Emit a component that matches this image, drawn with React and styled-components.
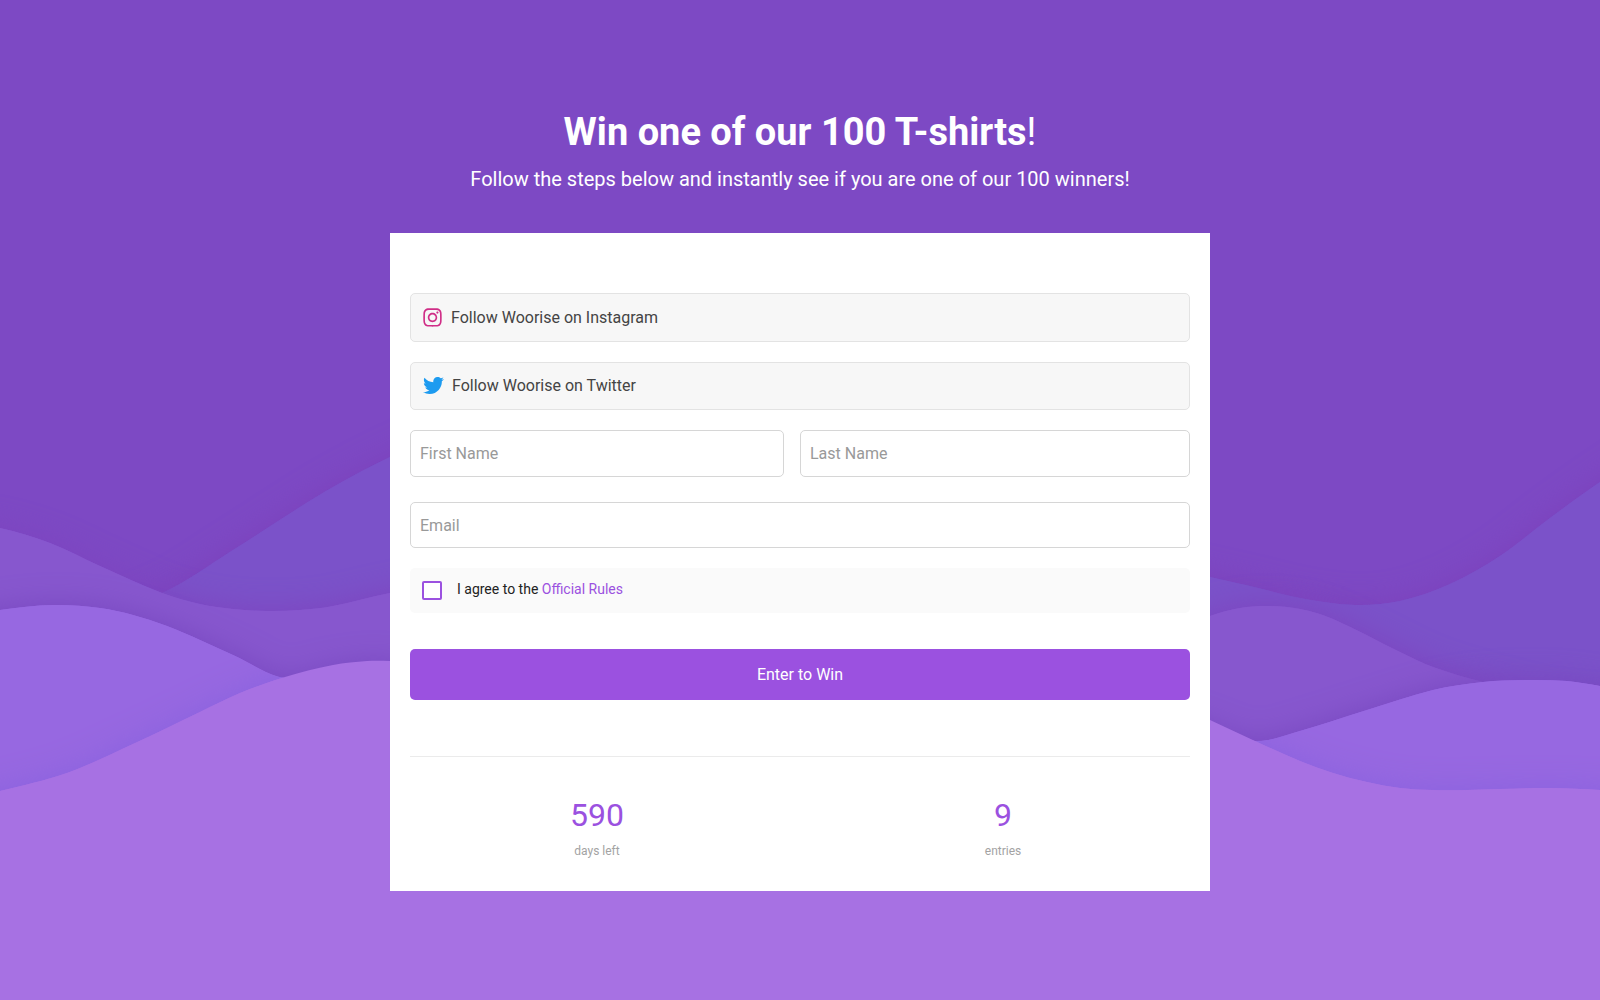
import React from "react";
import styled, { createGlobalStyle } from "styled-components";
import { FaInstagram, FaTwitter } from "react-icons/fa";

const GlobalStyle = createGlobalStyle`
  *, *::before, *::after { box-sizing: border-box; }
  body {
    margin: 0;
    background: #7d49c4;
    font-family: Roboto, "Liberation Sans", sans-serif;
  }
`;

const Page = styled.div`
  position: relative;
  isolation: isolate;
  min-height: 100vh;
  display: flex;
  flex-direction: column;
  align-items: center;
  padding: 109px 20px 60px;
`;

const Backdrop = styled.svg`
  position: absolute;
  inset: 0;
  z-index: -1;
  width: 100%;
  height: 100%;
`;

const Header = styled.header`
  display: flex;
  flex-direction: column;
  gap: 10px;
  margin-bottom: 40px;
  color: #fff;
  text-align: center;
`;

const Title = styled.h1`
  margin: 0;
  font-size: 38px;
  line-height: 46px;
  font-weight: 400;
`;

const Subtitle = styled.p`
  margin: 0;
  font-size: 20px;
  line-height: 28px;
`;

const Card = styled.main`
  width: 100%;
  max-width: 820px;
  padding: 60px 20px 32px;
  background: #fff;
`;

const Form = styled.form`
  display: flex;
  flex-direction: column;
`;

const SocialList = styled.div`
  display: flex;
  flex-direction: column;
  gap: 20px;
  margin-bottom: 20px;
`;

const SocialButton = styled.button`
  display: flex;
  align-items: center;
  gap: 9px;
  padding: 14px 12px;
  border: 1px solid #e3e3e3;
  border-radius: 5px;
  background: #f7f7f7;
  color: #444;
  font: inherit;
  font-size: 16px;
  line-height: 18px;
  text-align: left;
  cursor: pointer;
`;

const InstagramIcon = styled(FaInstagram)`
  width: 19px;
  height: 21px;
  margin: -1px 0;
  color: #d02e87;
`;

const TwitterIcon = styled(FaTwitter)`
  width: 21px;
  height: 21px;
  margin: -2px -1px -1px 0;
  color: #1d9bf0;
`;

const NameRow = styled.div`
  display: grid;
  grid-template-columns: 1fr 1fr;
  margin-bottom: 25px;
`;

const NameCell = styled.div`
  display: flex;
  padding-right: ${(p) => (p.$spaced ? "16px" : "0")};
`;

const TextInput = styled.input`
  width: 100%;
  min-width: 0;
  height: ${(p) => p.$height}px;
  padding: 0 9px;
  border: 1px solid #d6d6d6;
  border-radius: 5px;
  background: #fff;
  color: #333;
  font: inherit;
  font-size: 16px;
  &::placeholder {
    color: #999;
    opacity: 1;
  }
`;

const Consent = styled.div`
  display: flex;
  align-items: flex-start;
  gap: 15px;
  margin: 20px 0 36px;
  padding: 13px 12px;
  border-radius: 5px;
  background: #fafafa;
`;

const Checkbox = styled.input`
  appearance: none;
  flex: none;
  width: 20px;
  height: 19px;
  margin: 0;
  border: 2px solid #9b51e0;
  border-radius: 2px;
  background: #fff;
  cursor: pointer;
  &:checked {
    background: #9b51e0;
  }
`;

const ConsentLabel = styled.label`
  color: #222;
  font-size: 14px;
  line-height: 16px;
`;

const RulesLink = styled.a`
  color: #9b51e0;
  text-decoration: none;
`;

const SubmitButton = styled.button`
  height: 51px;
  border: 0;
  border-radius: 5px;
  background: #9b51e0;
  color: #fff;
  font: inherit;
  font-size: 16px;
  cursor: pointer;
`;

const Stats = styled.section`
  display: grid;
  grid-template-columns: 1fr 1fr;
  gap: 32px;
  margin-top: 56px;
  padding-top: 40px;
  border-top: 1px solid #ebebeb;
`;

const Stat = styled.div`
  display: flex;
  flex-direction: column;
  align-items: center;
  gap: 10px;
`;

const StatValue = styled.span`
  color: #9b51e0;
  font-size: 32px;
  line-height: 36px;
`;

const StatLabel = styled.span`
  color: #a3a3a3;
  font-size: 12px;
  line-height: 16px;
`;

const WAVES = [
  {
    fill: "#7b52c9",
    shadow: "#7c41bb",
    points: [[-60, 640], [60, 625], [162, 593], [233, 550], [300, 507], [333, 487], [390, 457], [460, 428], [640, 400], [900, 470], [1100, 549], [1210, 577], [1250, 586], [1300, 598], [1355, 605], [1400, 601], [1450, 584], [1500, 556], [1550, 518], [1600, 482], [1680, 430]],
  },
  {
    fill: "#8757ce",
    shadow: "#7d44bf",
    points: [[-60, 518], [0, 528], [50, 543], [100, 566], [162, 593], [200, 604], [233, 609], [267, 611], [300, 610], [333, 606], [390, 593], [600, 560], [900, 660], [1100, 658], [1210, 616], [1240, 608], [1270, 606], [1300, 609], [1333, 619], [1400, 652], [1433, 667], [1483, 682], [1560, 700], [1680, 705]],
  },
  {
    fill: "#9768e1",
    shadow: "#7848c0",
    points: [[-60, 622], [0, 610], [53, 605], [100, 608], [133, 615], [167, 626], [200, 640], [233, 655], [285, 678], [333, 668], [390, 664], [600, 722], [850, 700], [1100, 690], [1210, 726], [1255, 741], [1300, 731], [1367, 710], [1433, 690], [1483, 682], [1525, 680], [1567, 681], [1600, 686], [1680, 700]],
  },
  {
    fill: "#a771e3",
    shadow: "#8a62df",
    points: [[-60, 805], [0, 791], [67, 773], [133, 744], [200, 712], [240, 693], [285, 677], [333, 665], [367, 661], [390, 661], [420, 663], [600, 720], [850, 640], [1100, 667], [1210, 720], [1255, 741], [1300, 761], [1333, 773], [1367, 782], [1400, 788], [1433, 790], [1467, 790], [1500, 789], [1550, 788], [1600, 790], [1680, 796]],
  },
];

// Smooth curve through the crest points, closed along the bottom edge.
function wavePath(points) {
  let d = `M${points[0][0]} ${points[0][1]}`;
  for (let i = 0; i < points.length - 1; i += 1) {
    const before = points[Math.max(i - 1, 0)];
    const a = points[i];
    const b = points[i + 1];
    const after = points[Math.min(i + 2, points.length - 1)];
    const span = b[0] - a[0];
    const slopeA = (b[1] - before[1]) / (b[0] - before[0]);
    const slopeB = (after[1] - a[1]) / (after[0] - a[0]);
    d += `C${a[0] + span / 3} ${a[1] + (slopeA * span) / 3} ${b[0] - span / 3} ${b[1] - (slopeB * span) / 3} ${b[0]} ${b[1]}`;
  }
  return `${d}V1080H${points[0][0]}Z`;
}

const FRONT = WAVES.length - 1;

// The front wave casts its shade only on the wave right behind it.
function Waves() {
  return (
    <Backdrop viewBox="0 0 1600 1000" preserveAspectRatio="none" aria-hidden="true">
      <defs>
        {WAVES.map((wave, i) => (
          <filter key={wave.fill} id={`wave-${i}`} filterUnits="userSpaceOnUse" x="-60" y="300" width="1740" height="780" colorInterpolationFilters="sRGB">
            <feDropShadow dx="0" dy="0" stdDeviation="14" floodColor={wave.shadow} />
          </filter>
        ))}
        <clipPath id="behind-front">
          <path d={wavePath(WAVES[FRONT - 1].points)} />
        </clipPath>
      </defs>
      <rect width="1600" height="1000" fill="#7d49c4" />
      {WAVES.map((wave, i) => (
        <React.Fragment key={wave.fill}>
          <g clipPath={i === FRONT ? "url(#behind-front)" : undefined}>
            <path d={wavePath(wave.points)} fill={wave.fill} filter={`url(#wave-${i})`} />
          </g>
          <path d={wavePath(wave.points)} fill={wave.fill} />
        </React.Fragment>
      ))}
    </Backdrop>
  );
}

export default function App() {
  return (
    <>
      <GlobalStyle />
      <Page>
        <Waves />
        <Header>
          <Title><strong>Win one of our 100 T-shirts</strong>!</Title>
          <Subtitle>Follow the steps below and instantly see if you are one of our 100 winners!</Subtitle>
        </Header>
        <Card>
          <Form onSubmit={(e) => e.preventDefault()}>
            <SocialList>
              <SocialButton type="button"><InstagramIcon />Follow Woorise on Instagram</SocialButton>
              <SocialButton type="button"><TwitterIcon />Follow Woorise on Twitter</SocialButton>
            </SocialList>
            <NameRow>
              <NameCell $spaced>
                <TextInput $height={47} type="text" placeholder="First Name" aria-label="First Name" />
              </NameCell>
              <NameCell>
                <TextInput $height={47} type="text" placeholder="Last Name" aria-label="Last Name" />
              </NameCell>
            </NameRow>
            <TextInput $height={46} type="email" placeholder="Email" aria-label="Email" />
            <Consent>
              <Checkbox type="checkbox" id="rules" />
              <ConsentLabel htmlFor="rules">
                I agree to the <RulesLink href="#rules">Official Rules</RulesLink>
              </ConsentLabel>
            </Consent>
            <SubmitButton type="submit">Enter to Win</SubmitButton>
          </Form>
          <Stats>
            <Stat><StatValue>590</StatValue><StatLabel>days left</StatLabel></Stat>
            <Stat><StatValue>9</StatValue><StatLabel>entries</StatLabel></Stat>
          </Stats>
        </Card>
      </Page>
    </>
  );
}
